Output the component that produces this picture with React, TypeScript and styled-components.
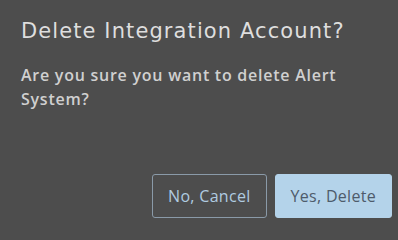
import React from "react";
import styled, { createGlobalStyle } from "styled-components";

const Global = createGlobalStyle`
  html, body { margin: 0; padding: 0; background: #4d4d4d; overflow: hidden; }
  * { box-sizing: border-box; }
`;

const Dialog = styled.div`
  width: 398px;
  height: 224px;
  background: #4d4d4d;
  padding: 17px 6px 6px 21px;
  display: flex;
  flex-direction: column;
  font-family: "Open Sans", "Noto Sans", sans-serif;
`;

const Title = styled.h2`
  margin: 0;
  font-family: "DejaVu Sans", "Open Sans", sans-serif;
  font-size: 21px;
  font-weight: 400;
  line-height: 28px;
  color: #dedede;
  letter-spacing: 1.1px;
`;

const Body = styled.p`
  margin: 18px 0 0;
  font-size: 16px;
  font-weight: 600;
  line-height: 24px;
  color: #d0d0d0;
  letter-spacing: 0.75px;
  width: 350px;
`;

const Footer = styled.div`
  margin-top: auto;
  display: flex;
  justify-content: flex-end;
  gap: 8px;
`;

const Button = styled.button<{ $primary?: boolean }>`
  height: 44px;
  padding: 0 15px;
  border-radius: 3px;
  font-family: inherit;
  font-size: 16px;
  font-weight: 400;
  letter-spacing: 0.3px;
  cursor: pointer;
  border: 1px solid ${(p) => (p.$primary ? "#b4d3ea" : "#8a9aa8")};
  background: ${(p) => (p.$primary ? "#b4d3ea" : "transparent")};
  color: ${(p) => (p.$primary ? "#4e5b6b" : "#b0cbe0")};
`;

export default function App() {
  return (
    <>
      <Global />
      <Dialog>
        <Title>Delete Integration Account?</Title>
        <Body>Are you sure you want to delete Alert System?</Body>
        <Footer>
          <Button>No, Cancel</Button>
          <Button $primary>Yes, Delete</Button>
        </Footer>
      </Dialog>
    </>
  );
}
